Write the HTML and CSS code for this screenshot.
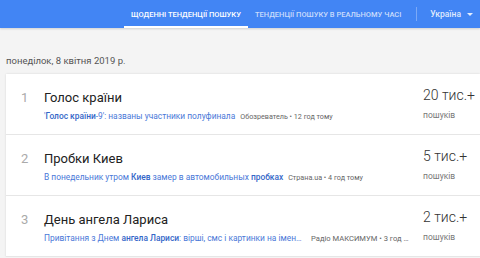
FILE: index.html
```html
<!DOCTYPE html>
<html lang="uk">
<head>
    <meta charset="UTF-8">
    <meta name="viewport" content="width=device-width, initial-scale=1.0">
    <title>Google Trends</title>
    <link rel="stylesheet" href="styles.css">
</head>
<body>
    <header class="topbar">
        <nav class="tabs">
            <a class="tab active">Щоденні тенденції пошуку</a>
            <a class="tab">Тенденції пошуку в реальному часі</a>
        </nav>
        <div class="divider"></div>
        <div class="country">Україна <span class="arrow"></span></div>
    </header>

    <main class="content">
        <p class="date">понеділок, 8 квітня 2019 р.</p>
        <div class="card">
            <div class="row">
                <div class="num">1</div>
                <div class="main">
                    <div class="title">Голос країни</div>
                    <div class="sub">
                        <span class="link">'<b>Голос країни</b>-9': названы участники полуфинала</span>
                        <span class="source">Обозреватель • 12 год тому</span>
                    </div>
                </div>
                <div class="count">
                    <div class="value">20 тис.+</div>
                    <div class="label">пошуків</div>
                </div>
            </div>
            <div class="row">
                <div class="num">2</div>
                <div class="main">
                    <div class="title">Пробки Киев</div>
                    <div class="sub">
                        <span class="link">В понедельник утром <b>Киев</b> замер в автомобильных <b>пробках</b></span>
                        <span class="source">Страна.ua • 4 год тому</span>
                    </div>
                </div>
                <div class="count">
                    <div class="value">5 тис.+</div>
                    <div class="label">пошуків</div>
                </div>
            </div>
            <div class="row">
                <div class="num">3</div>
                <div class="main">
                    <div class="title">День ангела Лариса</div>
                    <div class="sub">
                        <span class="link trunc">Привітання з Днем <b>ангела Лариси</b>: вірші, смс і картинки на іменини</span>
                        <span class="source trunc">Радіо МАКСИМУМ • 3 год тому</span>
                    </div>
                </div>
                <div class="count">
                    <div class="value">2 тис.+</div>
                    <div class="label">пошуків</div>
                </div>
            </div>
        </div>
    </main>
</body>
</html>
```

FILE: styles.css
```css
body {
    margin: 0;
    font-family: Roboto, "Noto Sans", Arial, sans-serif;
    background-color: #f4f4f4;
    color: #333;
}

/* top bar */
.topbar {
    display: flex;
    align-items: center;
    height: 28px;
    background-color: #4285f4;
    box-shadow: 0 1px 2px rgba(0, 0, 0, 0.15);
}

.tabs {
    display: flex;
    height: 100%;
    margin-left: 124px;
}

.tab {
    display: flex;
    align-items: center;
    padding: 2px 7px 0 7px;
    font-size: 7.5px;
    font-weight: 500;
    text-transform: uppercase;
    color: rgba(255, 255, 255, 0.72);
    border-bottom: 2px solid transparent;
    box-sizing: border-box;
}

.tab.active {
    width: 124px;
    justify-content: center;
    color: #fff;
    border-bottom-color: #fff;
}

.divider {
    width: 1px;
    height: 14px;
    margin-left: 8px;
    background-color: rgba(255, 255, 255, 0.3);
}

.country {
    display: flex;
    align-items: center;
    margin-left: 13px;
    font-size: 8.5px;
    font-weight: 500;
    color: rgba(255, 255, 255, 0.85);
}

.arrow {
    margin-left: 6px;
    border-left: 3px solid transparent;
    border-right: 3px solid transparent;
    border-top: 3px solid rgba(255, 255, 255, 0.85);
}

/* list */
.content {
    padding-left: 6px;
}

.date {
    margin: 0;
    padding: 27px 0 8px 0;
    font-size: 9.5px;
    color: #555;
}

.card {
    background-color: #fff;
    box-shadow: 0 0 2px rgba(0, 0, 0, 0.12);
}

.row {
    display: flex;
    align-items: flex-start;
    height: 60px;
    border-bottom: 1px solid #e6e6e6;
}

.num {
    width: 38px;
    padding: 16px 0 0 15px;
    box-sizing: border-box;
    font-size: 13px;
    color: #aaa;
}

.main {
    flex: 1;
    min-width: 0;
    padding-top: 16px;
}

.title {
    font-size: 13px;
    color: #222;
}

.sub {
    display: flex;
    align-items: baseline;
    margin-top: 6px;
    white-space: nowrap;
}

.link {
    font-size: 8.4px;
    color: #4a78d8;
}

.link b {
    font-weight: 500;
    color: #3366c8;
}

.source {
    margin-left: 5px;
    font-size: 7.2px;
    color: #666;
}

.trunc {
    overflow: hidden;
    text-overflow: ellipsis;
}

.link.trunc {
    max-width: 259px;
}

.source.trunc {
    margin-left: 8px;
    max-width: 100px;
    font-size: 7.6px;
}

.count {
    width: 57px;
    padding-top: 13px;
    flex-shrink: 0;
    white-space: nowrap;
}

.value {
    font-size: 14px;
    font-weight: 300;
    color: #333;
}

.label {
    margin-top: 7px;
    font-size: 8.5px;
    color: #777;
}
```
